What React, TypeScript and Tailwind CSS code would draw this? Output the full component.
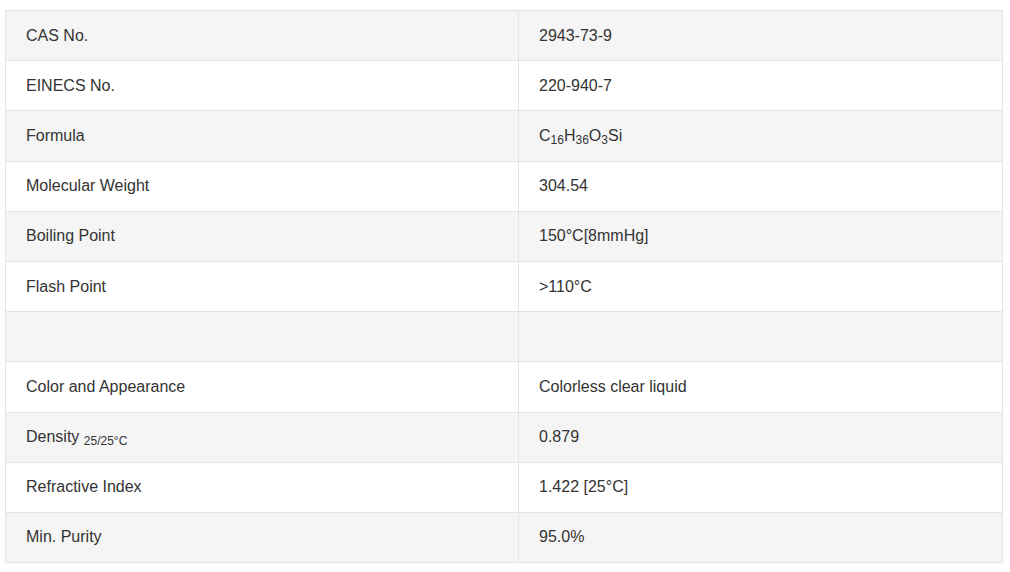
import React from "react";

type Row = { label: React.ReactNode; value: React.ReactNode };

const rows: Row[] = [
  { label: "CAS No.", value: "2943-73-9" },
  { label: "EINECS No.", value: "220-940-7" },
  {
    label: "Formula",
    value: (
      <>
        C<sub className="text-[12px]">16</sub>H<sub className="text-[12px]">36</sub>O
        <sub className="text-[12px]">3</sub>Si
      </>
    ),
  },
  { label: "Molecular Weight", value: "304.54" },
  { label: "Boiling Point", value: "150°C[8mmHg]" },
  { label: "Flash Point", value: ">110°C" },
  { label: "", value: "" },
  { label: "Color and Appearance", value: "Colorless clear liquid" },
  {
    label: (
      <>
        Density <sub className="text-[12px]">25/25°C</sub>
      </>
    ),
    value: "0.879",
  },
  { label: "Refractive Index", value: "1.422 [25°C]" },
  { label: "Min. Purity", value: "95.0%" },
];

export default function App() {
  return (
    <div className="bg-white w-[1010px] h-[572px] pt-[10px] pl-[5px] font-['Liberation_Sans',Arial,sans-serif] text-[16px] text-[#333]">
      <table className="w-[998px] border-collapse border border-[#e4e4e4] table-fixed">
        <colgroup>
          <col className="w-[513px]" />
          <col />
        </colgroup>
        <tbody>
          {rows.map((r, i) => (
            <tr key={i} className={i % 2 === 0 ? "bg-[#f5f5f5]" : "bg-white"}>
              <td className="h-[50.2px] border border-[#e4e4e4] pl-[20px] align-middle leading-[24px]">
                {r.label}
              </td>
              <td className="h-[50.2px] border border-[#e4e4e4] pl-[20px] align-middle leading-[24px]">
                {r.value}
              </td>
            </tr>
          ))}
        </tbody>
      </table>
    </div>
  );
}
